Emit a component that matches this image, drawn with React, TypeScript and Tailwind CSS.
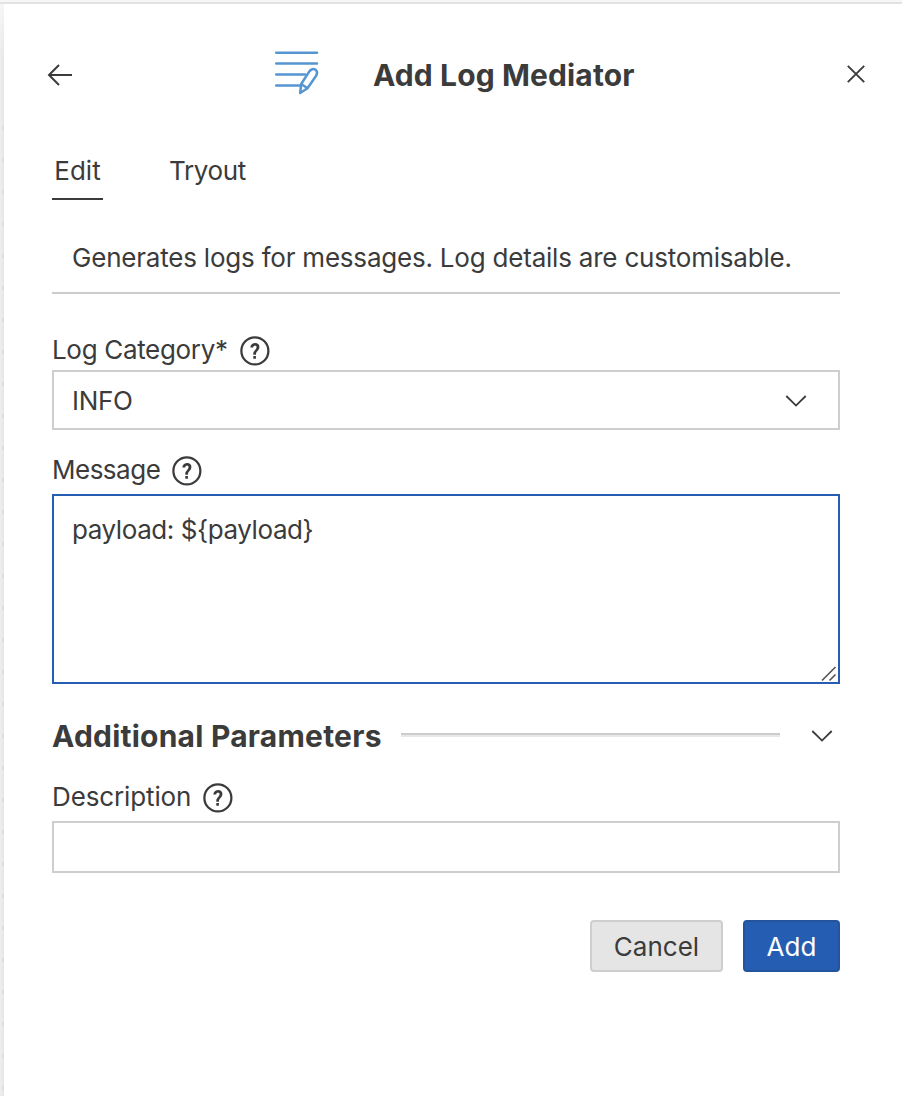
import { VscQuestion } from "react-icons/vsc";

function Chevron() {
  return (
    <svg width="22" height="14" viewBox="0 0 22 14" fill="none" stroke="#3b3b3b" strokeWidth="1.8">
      <path d="M1.3 2 L11 11.6 L20.7 2" />
    </svg>
  );
}

function Label({ text, className }: { text: string; className: string }) {
  return (
    <div className="flex h-8 items-center">
      <span className={`whitespace-nowrap text-[26px] leading-8 ${className}`}>{text}</span>
      <VscQuestion className="ml-2.5 size-9 shrink-0 translate-y-0.5" />
    </div>
  );
}

export default function App() {
  return (
    <div className="flex h-[1096px] w-[902px] flex-col overflow-hidden bg-white font-['Inter',sans-serif] text-[26px] leading-8 text-[#3b3b3b]">
      <div className="h-1 shrink-0 border-b-2 border-[#e2e2e2] bg-[#f6f6f6]" />
      <div className="flex flex-1">
        <div className="flex w-1 shrink-0 flex-col items-end bg-linear-to-r from-[#eeeeee] to-[#e6e6e6]">
          <div className="h-[122px] w-1 bg-linear-to-b from-[#f6f6f6] to-transparent to-40%" />
          <div className="w-0.5 flex-1 bg-[repeating-linear-gradient(to_bottom,#dedede_0px,#dedede_4px,transparent_4px,transparent_32px)]" />
        </div>
        <main className="flex flex-1 flex-col">
          <header className="mt-[42px] flex h-[54px] items-center pl-[43px] pr-[36px]">
            <svg className="mt-1" width="26" height="24" viewBox="0 0 26 24" fill="none" stroke="#3b3b3b" strokeWidth="2">
              <path d="M12 2 L2 12 L12 22 M2 12 H25" />
            </svg>
            <svg className="ml-[201px]" width="46" height="46" viewBox="0 0 46 46" fill="none" stroke="#5596d2" strokeWidth="2.5" strokeLinecap="round" strokeLinejoin="round">
              <path d="M2.2 2.8 H43 M2.2 13.6 H43 M2.2 24.6 H31 M2.2 35.4 H26" />
              <path d="M27.2 34 L35 21.8 C37 18.8 39.8 18.5 41.5 19.8 C43.4 21.2 43.3 23.8 41.8 26.2 L33.5 38.2 L26.2 43 Z M27.2 34 L33.5 38.2" />
            </svg>
            <h1 className="ml-[53px] mt-1 whitespace-nowrap text-[30px] font-bold leading-9 tracking-[0.12px]">Add Log Mediator</h1>
            <svg className="ml-auto mt-0.5" width="20" height="20" viewBox="0 0 20 20" fill="none" stroke="#3b3b3b" strokeWidth="1.9">
              <path d="M1.8 1.8 L18.2 18.2 M18.2 1.8 L1.8 18.2" />
            </svg>
          </header>
          <section className="ml-12 mr-[62px] flex flex-col">
            <nav className="mt-[50px] flex h-[50px] gap-[66px]">
              <button className="flex h-[50px] w-[51px] items-start justify-center border-b-2 border-[#3b3b3b] pt-[5px] leading-8">Edit</button>
              <button className="flex items-start pt-[5px] leading-8 tracking-[-0.35px]">Tryout</button>
            </nav>
            <p className="mt-[42px] h-[52px] whitespace-nowrap border-b-2 border-[#cccccc] pl-5 leading-8 tracking-[-0.21px]">Generates logs for messages. Log details are customisable.</p>
            <div className="mt-10"><Label text="Log Category*" className="tracking-[-0.33px]" /></div>
            <div className="mt-1 flex h-[60px] items-center justify-between border-2 border-[#cecece] pl-[18px] pr-[31px] pt-0.5">
              <span className="tracking-[-0.3px]">INFO</span>
              <Chevron />
            </div>
            <div className="mt-6"><Label text="Message" className="tracking-[-0.5px]" /></div>
            <div className="mt-2 flex h-[190px] justify-between border-2 border-[#255db3] pl-[18px] pt-[18px]">
              <span className="tracking-[-0.42px]">{"payload: ${payload}"}</span>
              <svg className="mr-px self-end" width="16" height="16" viewBox="0 0 16 16" stroke="#555555" strokeWidth="1.6">
                <path d="M1 14.5 L14.5 1 M8.5 14.5 L14.5 8.5" />
              </svg>
            </div>
            <div className="mt-8 flex h-10 items-center">
              <h2 className="w-[329px] whitespace-nowrap text-[30px] font-bold leading-10 tracking-[0.22px]">Additional Parameters</h2>
              <div className="-mt-0.5 ml-5 h-1 w-[379px] border-b-2 border-[#e8e8e8] bg-[#cccccc]" />
              <div className="ml-auto mr-[7px]"><Chevron /></div>
            </div>
            <div className="mt-[25px]"><Label text="Description" className="tracking-[-0.13px]" /></div>
            <input aria-label="Description" className="mt-2 h-[52px] border-2 border-[#cecece] px-[18px] outline-none" />
            <div className="mt-[47px] flex justify-end gap-5">
              <button className="h-[52px] w-[133px] rounded border-2 border-[#cecece] bg-[#e5e5e5] pt-0.5">Cancel</button>
              <button className="h-[52px] w-[97px] rounded border-2 border-[#24549c] bg-[#255db3] pt-0.5 text-white">Add</button>
            </div>
          </section>
        </main>
      </div>
    </div>
  );
}
